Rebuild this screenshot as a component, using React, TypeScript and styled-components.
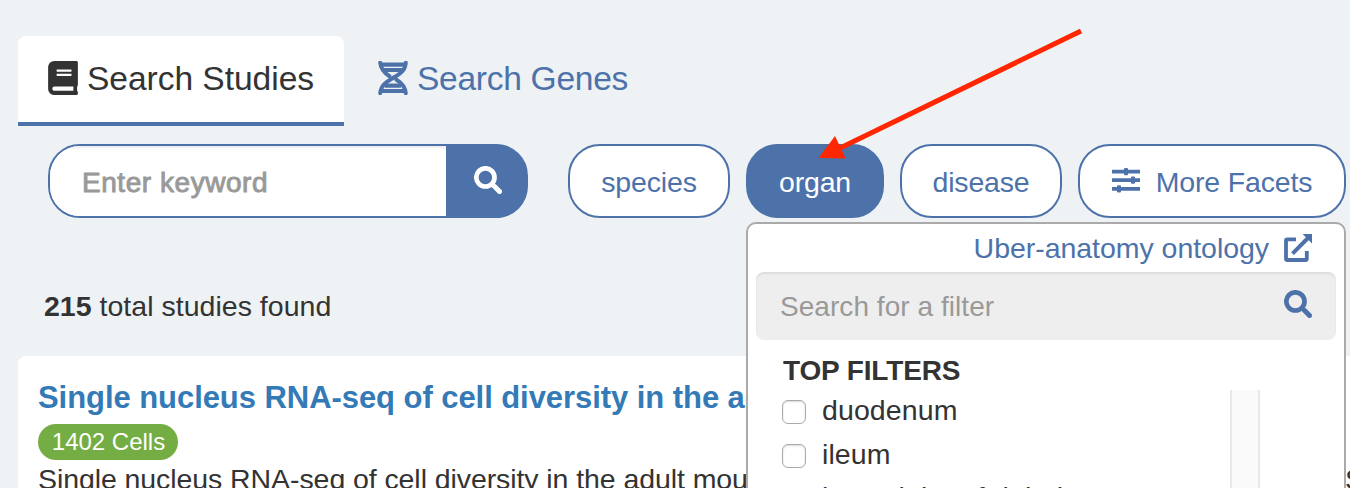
import React from "react";
import styled, { createGlobalStyle } from "styled-components";
import { FaBook } from "react-icons/fa";

const BLUE = "#4d72aa";
const INK = "#333333";

const GlobalStyle = createGlobalStyle`
  * { box-sizing: border-box; }
  html, body { margin: 0; padding: 0; overflow: hidden; }
  body {
    background: #eef2f5;
    color: ${INK};
    font-family: "Liberation Sans", Arial, Helvetica, sans-serif;
    font-size: 28.5px;
  }
  svg { display: block; flex: none; }
`;

const Page = styled.main`
  position: relative;
  width: 1350px;
  height: 488px;
  overflow: hidden;
  padding-top: 36px;
`;

const Tabs = styled.nav`
  display: flex;
  padding-left: 18px;
`;

const Tab = styled.a<{ $active?: boolean }>`
  display: flex;
  align-items: center;
  gap: 9px;
  height: 90px;
  padding: 0 0 0 30px;
  width: ${(p) => (p.$active ? "326px" : "auto")};
  margin-right: 4px;
  border-bottom: 4px solid ${(p) => (p.$active ? BLUE : "transparent")};
  border-radius: ${(p) => (p.$active ? "8px 8px 0 0" : "0")};
  background: ${(p) => (p.$active ? "#ffffff" : "transparent")};
  color: ${(p) => (p.$active ? INK : BLUE)};
  font-size: 33.6px;
  letter-spacing: ${(p) => (p.$active ? "-0.05px" : "-0.3px")};
  white-space: nowrap;
`;

const TabIcon = styled.span`
  display: flex;
  flex: none;
  justify-content: center;
  width: 30px;
  padding-bottom: 3px;
`;

const SearchRow = styled.div`
  display: flex;
  align-items: center;
  margin-top: 18px;
  padding-left: 48px;
`;

const KeywordBox = styled.div`
  display: flex;
  width: 480px;
  height: 74px;
  margin-right: 40px;
  border: 2px solid ${BLUE};
  border-radius: 32px;
  overflow: hidden;
  background: linear-gradient(to right, #ffffff 50%, ${BLUE} 50%);
`;

const KeywordField = styled.div`
  flex: 1;
  padding: 2px 0 0 32px;
  background: #ffffff;
  box-shadow: inset 0 2px 3px rgba(0, 0, 0, 0.075);
  color: #999999;
  font-size: 28px;
  line-height: 70px;
  letter-spacing: 0.55px;
  -webkit-text-stroke: 0.9px #999999;
`;

const KeywordButton = styled.div`
  display: flex;
  justify-content: center;
  align-items: center;
  width: 80px;
  padding: 0 0 2px 4px;
  background: ${BLUE};
  color: #ffffff;
`;

const Facets = styled.div`
  display: flex;
  gap: 16px;
`;

const Facet = styled.div<{ $width: number; $active?: boolean }>`
  display: flex;
  align-items: center;
  justify-content: center;
  gap: 16px;
  width: ${(p) => p.$width}px;
  height: 74px;
  padding-top: 2px;
  border: 2px solid ${BLUE};
  border-radius: 32px;
  background: ${(p) => (p.$active ? BLUE : "#ffffff")};
  color: ${(p) => (p.$active ? "#ffffff" : BLUE)};
  letter-spacing: -0.17px;
  white-space: nowrap;
`;

const SliderIcon = styled.svg`
  margin-top: -4px;
`;

const ResultCount = styled.div`
  margin-top: 68px;
  padding-left: 44px;
  line-height: 40px;
  letter-spacing: 0.02px;
`;

const StudyCard = styled.article`
  display: flex;
  flex-direction: column;
  align-items: flex-start;
  margin: 30px -20px 0 18px;
  height: 200px;
  padding: 22px 0 0 20px;
  border-radius: 8px;
  background: #ffffff;
`;

const StudyTitle = styled.h4`
  margin: 0;
  color: #337ab7;
  font-size: 31px;
  line-height: 40px;
  letter-spacing: -0.06px;
  white-space: nowrap;
`;

const CellBadge = styled.span`
  width: 140px;
  height: 36px;
  margin-top: 6px;
  padding-left: 1px;
  border-radius: 18px;
  background: #73ad43;
  color: #ffffff;
  font-size: 24px;
  line-height: 35px;
  text-align: center;
`;

const Description = styled.p`
  display: flex;
  justify-content: space-between;
  width: 1326px;
  margin: 0;
  line-height: 39px;
  letter-spacing: -0.08px;
  white-space: nowrap;
`;

const FilterPanel = styled.section`
  position: absolute;
  top: 222px;
  left: 746px;
  width: 600px;
  height: 400px;
  padding: 4px 8px 0;
  border: 2px solid #aaaaaa;
  border-radius: 10px;
  background: #ffffff;
`;

const OntologyLink = styled.a`
  display: flex;
  justify-content: flex-end;
  align-items: flex-start;
  gap: 15px;
  height: 44px;
  padding-right: 24px;
  color: ${BLUE};
  line-height: 40px;
  letter-spacing: -0.04px;

  svg { margin-top: 6px; }
`;

const FilterSearch = styled.div`
  display: flex;
  justify-content: space-between;
  height: 68px;
  padding: 0 24px;
  border-radius: 8px;
  background: #eeeeee;
  box-shadow: inset 0 2px 2px rgba(0, 0, 0, 0.075);
  color: #999999;
  font-size: 28px;
  line-height: 69px;
  letter-spacing: 0.05px;
`;

const FilterSearchIcon = styled.span`
  padding-top: 18px;
  color: ${BLUE};
`;

const FilterHeading = styled.h5`
  margin: 10px 0 0 27px;
  font-size: 28px;
  line-height: 41px;
  letter-spacing: -0.15px;
`;

const FilterList = styled.div`
  display: flex;
  justify-content: space-between;
  width: 478px;
  height: 220px;
  margin: -1px 0 0 26px;
`;

const ScrollTrack = styled.div`
  width: 30px;
  border: solid #e8e8e8;
  border-width: 0 2px;
  background: #fafafa;
`;

const Checkbox = styled.span`
  width: 24px;
  height: 24px;
  margin-top: 10px;
  border: 1.5px solid #aaaaaa;
  border-radius: 6px;
  background: #ffffff;
  box-shadow: inset 0 1px 2px rgba(0, 0, 0, 0.15);
`;

const FilterItem = styled.label`
  display: flex;
  align-items: flex-start;
  gap: 16px;
  height: 44px;
  line-height: 41px;
  letter-spacing: 0.1px;
  white-space: nowrap;

  &:last-child { line-height: 39px; }
`;

const Pointer = styled.svg`
  position: absolute;
  top: 20px;
  left: 800px;
`;

const FILTERS = ["duodenum", "ileum", "lower lobe of right lung"];

const Magnifier = () => (
  <svg width="28" height="28" viewBox="0 0 28 28" fill="none" stroke="currentColor">
    <circle cx="11.4" cy="11.4" r="9.1" strokeWidth="4.7" />
    <path d="M18 18 20.600 20.600" strokeWidth="4" />
    <path d="M20.600 20.600 25.500 25.500" strokeWidth="5" strokeLinecap="round" />
  </svg>
);

const Helix = () => (
  <svg width="30" height="34" viewBox="0 0 30 34" fill="none" stroke="currentColor">
    <path d="M3 3.600h24M6 9h18M7 24.600h16M3 30h24" strokeWidth="4.200" />
    <path d="M27.800 1.800C27 11 20 14 15 17S3 23 2.200 32.200" strokeWidth="4" strokeLinecap="round" />
    <path d="M2.200 1.800C3 9.500 7.500 12.700 11.500 15.200M18.500 18.800C22.500 21.300 27 24.500 27.800 32.200" strokeWidth="4" strokeLinecap="round" />
  </svg>
);

const Sliders = () => (
  <SliderIcon width="28" height="25" viewBox="0 0 28 25" fill="currentColor">
    <path d="M0 1.700h28v3.800H0zM0 10.300h28v3.800H0zM0 18.900h28v3.800H0z" />
    <rect x="12" y="0" width="4" height="7.200" rx="1" />
    <rect x="19" y="8.600" width="4" height="7.200" rx="1" />
    <rect x="5" y="17.200" width="4" height="7.200" rx="1" />
  </SliderIcon>
);

const ExternalLink = () => (
  <svg width="28" height="28" viewBox="0 0 28 28" fill="none" stroke="currentColor">
    <path d="M12 5.300H3.200a1.200 1.200 0 0 0-1.200 1.200v18.300a1.200 1.200 0 0 0 1.200 1.200h18.400a1.200 1.200 0 0 0 1.200-1.200V17" strokeWidth="3.800" />
    <path d="M8.500 19.600 24 4" strokeWidth="4" />
    <path d="M18.600 0H28v9.400z" fill="currentColor" stroke="none" />
  </svg>
);

export default function App() {
  return (
    <>
      <GlobalStyle />
      <Page>
        <Tabs>
          <Tab $active>
            <TabIcon><FaBook size={34} /></TabIcon>
            Search Studies
          </Tab>
          <Tab>
            <TabIcon><Helix /></TabIcon>
            Search Genes
          </Tab>
        </Tabs>
        <SearchRow>
          <KeywordBox>
            <KeywordField>Enter keyword</KeywordField>
            <KeywordButton><Magnifier /></KeywordButton>
          </KeywordBox>
          <Facets>
            <Facet $width={162}>species</Facet>
            <Facet $width={138} $active>organ</Facet>
            <Facet $width={162}>disease</Facet>
            <Facet $width={268}><Sliders />More Facets</Facet>
          </Facets>
        </SearchRow>
        <ResultCount><strong>215</strong> total studies found</ResultCount>
        <StudyCard>
          <StudyTitle>Single nucleus RNA-seq of cell diversity in the adult</StudyTitle>
          <CellBadge>1402 Cells</CellBadge>
          <Description>
            <span>Single nucleus RNA-seq of cell diversity in the adult mouse</span>
            <span>S</span>
          </Description>
        </StudyCard>
        <FilterPanel>
          <OntologyLink>Uber-anatomy ontology<ExternalLink /></OntologyLink>
          <FilterSearch>
            Search for a filter
            <FilterSearchIcon><Magnifier /></FilterSearchIcon>
          </FilterSearch>
          <FilterHeading>TOP FILTERS</FilterHeading>
          <FilterList>
            <div>
              {FILTERS.map((name) => (
                <FilterItem key={name}><Checkbox />{name}</FilterItem>
              ))}
            </div>
            <ScrollTrack />
          </FilterList>
        </FilterPanel>
        <Pointer width="300" height="150" viewBox="800 20 300 150">
          <path d="M1081 31 836 150" stroke="#ff2600" strokeWidth="5" />
          <path d="M818.500 158 835 136l10.700 22.500z" fill="#ff2600" />
        </Pointer>
      </Page>
    </>
  );
}
